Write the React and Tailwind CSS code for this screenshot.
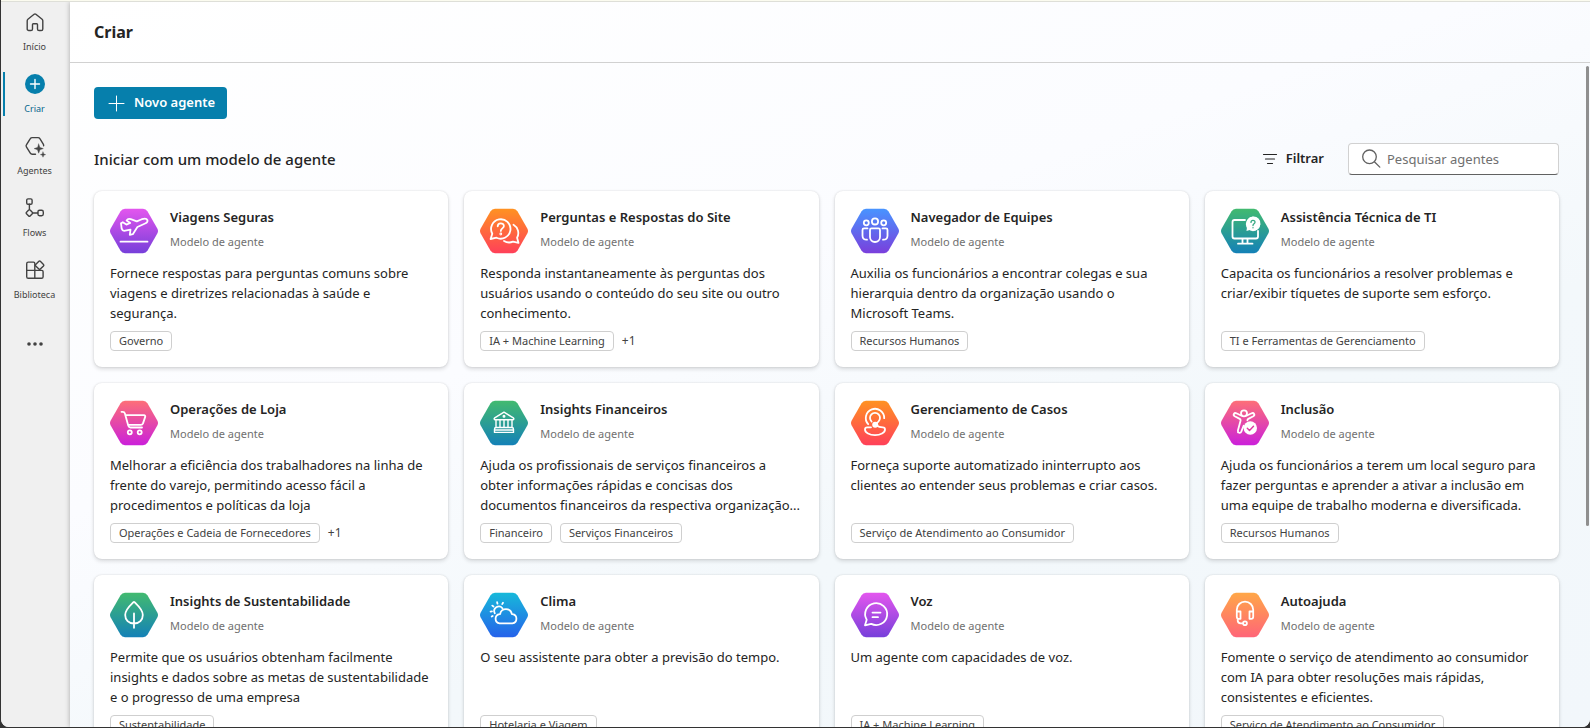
import React from "react";

const gradients = {
  purple: ["#e356ee", "#773fda"],
  orange: ["#ff9222", "#ff4059"],
  blue: ["#4894ff", "#7a3fdc"],
  green: ["#42ba70", "#1481b7"],
  pink: ["#fd6f78", "#cb20da"],
  sky: ["#17b9da", "#2562ea"],
  peach: ["#ffa748", "#ff6578"],
};

const glyphs = {
  plane: (
    <>
      <path d="M11 16.200l1.800-1 3.600 2.400 3.800-1.600-3.600-2.600c1-1.600 2.600-1.800 4.200-1.200l6 2.200 5-2.200c2.800-1 5-.6 5.600.9.600 1.600-.7 2.700-2.300 3.400L27.400 20l-4.600 7.200-3 .6.700-5.200-5.300 1.100c-1.800.4-3-.2-3.500-1.900z" />
      <path d="M10.500 34.700h27" />
    </>
  ),
  question: (
    <>
      <path d="M10.600 32l1.700-5.300a9.700 9.700 0 1 1 4.200 4z" />
      <path d="M17.700 19.300c0-4 6.200-3.800 6.200-.3 0 2.400-3.100 2.400-3.100 4.900" />
      <circle cx="20.800" cy="27" r=".5" />
      <path d="M33.500 17.700a9.700 9.700 0 0 1 3.600 13l1.400 5.200-5.500-1.300a9.500 9.500 0 0 1-9-.7" />
    </>
  ),
  team: (
    <>
      <circle cx="24" cy="14.400" r="3.100" />
      <circle cx="15.300" cy="15.800" r="2.500" />
      <circle cx="32.700" cy="15.800" r="2.500" />
      <path d="M20.500 21.400h7c.9 0 1.500.6 1.500 1.500V30a5 5 0 0 1-10 0v-7.100c0-.9.6-1.500 1.500-1.500z" />
      <path d="M16.500 21.400H13c-.9 0-1.500.6-1.500 1.500v5.800c0 2.800 1.700 4.200 4.500 4M31.500 21.400H35c.9 0 1.500.6 1.500 1.500v5.800c0 2.800-1.700 4.200-4.500 4" />
    </>
  ),
  monitor: (
    <>
      <path d="M24 13H13.500c-1.200 0-2 .8-2 2v14.500c0 1.200.8 2 2 2h21.500c1.200 0 2-.8 2-2V24M21.500 31.500v5M26.500 31.500v5M17 36.700h14.500" />
      <path d="M25.500 24l.6-4.700a7 7 0 1 1 3.400 3.500z" fill="white" stroke="none" />
      <circle cx="32" cy="17" r="7.200" fill="white" stroke="none" />
      <path d="M30 15.400c0-2.700 4-2.600 4-.2 0 1.700-2 1.500-2 3.300M32 20.600v.2" stroke="#36a882" strokeWidth="1.300" />
    </>
  ),
  cart: (
    <>
      <path d="M11.500 12.800h1.300c1.100 0 1.800.6 2.100 1.700l3.400 12.300c.4 1.200 1 1.700 2.200 1.700H32M15.500 16.200H34c1 0 1.500.7 1.200 1.700l-2.200 6.500c-.4 1-1 1.500-2.100 1.500H18.300" />
      <circle cx="19.800" cy="33.300" r="2" />
      <circle cx="29.700" cy="33.300" r="2" />
    </>
  ),
  bank: (
    <g strokeWidth="1.400">
      <path d="M24 13.200l9.300 5.600c.9.600.6 1.900-.5 1.900H15.200c-1.100 0-1.400-1.300-.5-1.900zM16 20.700v7.600M20 20.700v7.600M24 20.700v7.600M28 20.700v7.600M32 20.700v7.600M14.500 33.400v-3.200c0-1 .6-1.700 1.600-1.700h15.800c1 0 1.600.7 1.600 1.700v3.200zM14.500 31H33.500" />
      <circle cx="24" cy="17.300" r=".8" />
    </g>
  ),
  care: (
    <>
      <path d="M17.200 25.200a9.200 9.200 0 1 1 16-6" />
      <path d="M20.600 22.600a5 5 0 1 1 6.800 0L24 25.600" />
      <circle cx="24.200" cy="25.700" r="2.100" fill="white" />
      <path d="M20 28.300h-3.800c-1.400 0-2.200.8-2.200 2.100 0 3.300 4.600 5.700 10 5.700s10-2.400 10-5.700c0-1.300-.8-2.100-2.200-2.100-2.800 0-4.600-.6-6-1.800" />
    </>
  ),
  inclusion: (
    <>
      <circle cx="23" cy="14.300" r="3" />
      <path d="M20 16.500l-4.600-2.200c-2.300-1-3.800 1.800-1.700 3l5 2.600c.7.400 1 .9.900 1.700l-2.700 10c-.5 2.200 2.500 3.200 3.400 1.100l2.400-6M26 16.500l4.600-2.200c2.300-1 3.800 1.800 1.700 3l-5 2.600c-.7.400-.9.700-.9 1.400" />
      <circle cx="29.300" cy="29" r="6.700" fill="white" stroke="none" />
      <path d="M26.300 29.200l2.200 2.200 4-4.200" stroke="#df399f" strokeWidth="1.400" />
    </>
  ),
  leaf: (
    <path d="M24 36.800V22.500M24 32.500c-5.400 0-8.800-3.600-8.800-8.600 0-5.400 4.800-9.400 8-12.500.5-.5 1.100-.5 1.600 0 3.200 3.100 8 7.100 8 12.500 0 5-3.400 8.600-8.800 8.600z" />
  ),
  weather: (
    <>
      <path d="M26 18.200a6 6 0 0 1 5.900 4.900h.5a4.700 4.700 0 0 1 0 9.300H19.600a4.700 4.700 0 0 1 0-9.300h.5a6 6 0 0 1 5.900-4.900z" />
      <path d="M14.800 22.300a4.600 4.600 0 0 1 7.600-5.100M10.600 20.600l1.400-.3M12.300 14.600l1.200.9M17.100 11.200l.4 1.500M23 11.800l-.8 1.300M11.700 25.500l1-.6" />
    </>
  ),
  voice: (
    <>
      <path d="M14 34.300l1.700-5.600a11 11 0 1 1 4.500 4.200z" />
      <path d="M21.500 21.600h8M21.500 26.200h5.500" />
    </>
  ),
  headset: (
    <>
      <path d="M19.500 20.500h-3.700v-1.700a8.200 8.200 0 0 1 16.400 0v1.700h-3.700v7.300h1.600c1.300 0 2.100-.8 2.100-2.100v-5.200M15.800 20.500v5.200c0 1.300.8 2.100 2.100 2.100h1.600v-7.300M16.700 27.800v1.500c0 1.900 1.300 3 3 3h2.100" />
      <circle cx="24" cy="32.300" r="1.900" />
    </>
  ),
};

const agents = [
  { title: "Viagens Seguras", glyph: "plane", color: "purple", text: "Fornece respostas para perguntas comuns sobre viagens e diretrizes relacionadas à saúde e segurança.", tags: ["Governo"] },
  { title: "Perguntas e Respostas do Site", glyph: "question", color: "orange", text: "Responda instantaneamente às perguntas dos usuários usando o conteúdo do seu site ou outro conhecimento.", tags: ["IA + Machine Learning"], more: "+1" },
  { title: "Navegador de Equipes", glyph: "team", color: "blue", text: "Auxilia os funcionários a encontrar colegas e sua hierarquia dentro da organização usando o Microsoft Teams.", tags: ["Recursos Humanos"] },
  { title: "Assistência Técnica de TI", glyph: "monitor", color: "green", text: "Capacita os funcionários a resolver problemas e criar/exibir tíquetes de suporte sem esforço.", tags: ["TI e Ferramentas de Gerenciamento"] },
  { title: "Operações de Loja", glyph: "cart", color: "pink", text: "Melhorar a eficiência dos trabalhadores na linha de frente do varejo, permitindo acesso fácil a procedimentos e políticas da loja", tags: ["Operações e Cadeia de Fornecedores"], more: "+1" },
  { title: "Insights Financeiros", glyph: "bank", color: "green", text: "Ajuda os profissionais de serviços financeiros a obter informações rápidas e concisas dos documentos financeiros da respectiva organização...", tags: ["Financeiro", "Serviços Financeiros"] },
  { title: "Gerenciamento de Casos", glyph: "care", color: "orange", text: "Forneça suporte automatizado ininterrupto aos clientes ao entender seus problemas e criar casos.", tags: ["Serviço de Atendimento ao Consumidor"] },
  { title: "Inclusão", glyph: "inclusion", color: "pink", text: "Ajuda os funcionários a terem um local seguro para fazer perguntas e aprender a ativar a inclusão em uma equipe de trabalho moderna e diversificada.", tags: ["Recursos Humanos"] },
  { title: "Insights de Sustentabilidade", glyph: "leaf", color: "green", text: "Permite que os usuários obtenham facilmente insights e dados sobre as metas de sustentabilidade e o progresso de uma empresa", tags: ["Sustentabilidade"] },
  { title: "Clima", glyph: "weather", color: "sky", text: "O seu assistente para obter a previsão do tempo.", tags: ["Hotelaria e Viagem"] },
  { title: "Voz", glyph: "voice", color: "purple", text: "Um agente com capacidades de voz.", tags: ["IA + Machine Learning"] },
  { title: "Autoajuda", glyph: "headset", color: "peach", text: "Fomente o serviço de atendimento ao consumidor com IA para obter resoluções mais rápidas, consistentes e eficientes.", tags: ["Serviço de Atendimento ao Consumidor"] },
];

function HexIcon({ id, color, glyph }) {
  const [from, to] = gradients[color];
  return (
    <svg viewBox="0 0 48 48" className="size-12 shrink-0" aria-hidden="true">
      <defs>
        <linearGradient id={id} x1="0" y1="0" x2="0" y2="1">
          <stop offset="0" stopColor={from} />
          <stop offset="1" stopColor={to} />
        </linearGradient>
      </defs>
      <path
        d="M15 1.800h18q3 0 4.600 2.600L47.300 21.500q1.400 2.500 0 5L37.600 43.600Q36 46.200 33 46.200H15q-3 0-4.600-2.600L.7 26.500q-1.400-2.500 0-5L10.400 4.400Q12 1.800 15 1.800z"
        fill={`url(#${id})`}
      />
      <g fill="none" stroke="white" strokeWidth="1.800" strokeLinecap="round" strokeLinejoin="round">
        {glyphs[glyph]}
      </g>
    </svg>
  );
}

function AgentCard({ agent, index }) {
  return (
    <article className="flex min-h-44 min-w-0 flex-col gap-2 rounded-lg bg-white p-4 shadow-[0_0_2px_rgba(0,0,0,0.12),0_2px_4px_rgba(0,0,0,0.14)]">
      <div className="flex gap-3">
        <HexIcon id={`hex-${index}`} color={agent.color} glyph={agent.glyph} />
        <div className="flex min-w-0 flex-col gap-1">
          <h3 className="text-[13px] leading-5 font-semibold text-[#242424]">{agent.title}</h3>
          <p className="text-[11px] leading-[22px] text-[#707070]">Modelo de agente</p>
        </div>
      </div>
      <p className="min-h-15 text-[13px] leading-5 text-[#242424]">{agent.text}</p>
      <div className="flex items-center gap-2 text-[11px] leading-4 text-[#424242]">
        {agent.tags.map((tag) => (
          <span key={tag} className="flex h-5 items-center rounded-sm border border-[#cfcfcf] px-2 whitespace-nowrap">
            {tag}
          </span>
        ))}
        {agent.more && <span className="text-xs">{agent.more}</span>}
      </div>
    </article>
  );
}

const navIcons = {
  home: <path d="M9.100 2.300a1.400 1.400 0 0 1 1.800 0l6.200 5c.4.400.7.900.7 1.500v8.100c0 .9-.7 1.600-1.600 1.600h-2.100c-.9 0-1.600-.7-1.600-1.600v-4.300c0-.5-.4-.8-.8-.8H8.300c-.5 0-.8.3-.8.8v4.300c0 .9-.7 1.600-1.600 1.600H3.800c-.9 0-1.600-.7-1.600-1.600V8.800c0-.6.200-1.100.7-1.500z" />,
  create: (
    <>
      <circle cx="10" cy="10" r="10" fill="#067fac" stroke="none" />
      <path d="M10 5.500v9M5.500 10h9" stroke="white" />
    </>
  ),
  agents: (
    <>
      <path d="M10.500 18.200H7.200c-.8 0-1.500-.4-1.900-1.100L1.400 10.800c-.4-.6-.4-1.300 0-1.900l3.900-6.200c.4-.7 1.100-1.100 1.900-1.100h5.800c.8 0 1.500.4 1.900 1.100l3.500 5.700c.3.500.4.9.2 1.400" />
      <path d="M13.700 8l1.200 3.400 3.400 1.200-3.400 1.200-1.200 3.400-1.200-3.400-3.400-1.200 3.400-1.200zM18 16l.7 1.900 1.900.7-1.900.7-.7 1.900-.7-1.900-1.900-.7 1.900-.7z" fill="currentColor" stroke="currentColor" strokeWidth=".4" />
    </>
  ),
  flows: (
    <>
      <rect x="1.700" y=".9" width="5.400" height="5.400" rx="1.300" />
      <rect x="12.900" y="12.300" width="5.400" height="5.400" rx="1.700" />
      <path d="M4.400 6.300v5.300M7.700 15h5.200M3.700 12l-2.200 2.300c-.4.400-.4 1 0 1.400L3.700 18c.4.400 1 .4 1.400 0l2.200-2.300c.4-.4.4-1 0-1.400L5.100 12c-.4-.4-1-.4-1.400 0z" />
    </>
  ),
  library: (
    <>
      <path d="M9.800 18.300V3.400c0-.7-.6-1.300-1.300-1.300H3.300c-.9 0-1.600.7-1.600 1.600V16.700c0 .9.700 1.600 1.600 1.600h13.200c.9 0 1.600-.7 1.600-1.600v-5c0-.7-.6-1.300-1.300-1.300H1.700" />
      <path d="M13.900 1.300l-3.200 3.200c-.4.400-.4 1 0 1.400l3.200 3.200c.4.400 1 .4 1.400 0l3.200-3.200c.4-.4.400-1 0-1.400l-3.200-3.200c-.4-.4-1-.4-1.400 0z" />
    </>
  ),
};

const navItems = [
  { label: "Início", icon: "home" },
  { label: "Criar", icon: "create", active: true },
  { label: "Agentes", icon: "agents" },
  { label: "Flows", icon: "flows" },
  { label: "Biblioteca", icon: "library" },
];

function Sidebar() {
  return (
    <nav className="flex w-[69px] shrink-0 flex-col items-center gap-[18px] bg-[#f0f0f0] pt-2">
      {navItems.map(({ label, icon, active }) => (
        <a
          key={label}
          href="#"
          className={
            active
              ? "relative flex h-11 w-full flex-col items-center gap-2 pt-0.5 pr-0.5 text-[#03658c]"
              : "relative flex h-11 w-full flex-col items-center gap-2 pt-0.5 pr-0.5 text-[#424242]"
          }
        >
          {active && <span className="absolute top-0 left-0.5 h-11 w-0.5 bg-[#067fac]" />}
          <svg viewBox="0 0 20 20" className="size-5 shrink-0 overflow-visible" fill="none" stroke="currentColor" strokeWidth="1.400" strokeLinecap="round" strokeLinejoin="round" aria-hidden="true">
            {navIcons[icon]}
          </svg>
          <span className="text-[9px] leading-[14px]">{label}</span>
        </a>
      ))}
      <button type="button" aria-label="Mais" className="flex h-12 w-full items-center justify-center pr-0.5 text-[#424242]">
        <svg viewBox="0 0 20 20" className="size-5" fill="currentColor" aria-hidden="true">
          <circle cx="4" cy="10" r="1.800" />
          <circle cx="10" cy="10" r="1.800" />
          <circle cx="16" cy="10" r="1.800" />
        </svg>
      </button>
    </nav>
  );
}

export default function App() {
  return (
    <div className="flex h-screen bg-[#333333] pb-px pl-px font-['Noto_Sans','Open_Sans',sans-serif]">
      <div className="flex min-w-0 flex-1 flex-col overflow-hidden rounded-b-lg bg-white">
        <div className="h-0.5 shrink-0 border-b border-[#dedfd8] bg-[#fbfbef]" />
        <div className="flex min-h-0 flex-1 overflow-hidden">
          <Sidebar />
          <main className="relative flex min-w-0 flex-1 flex-col bg-linear-[160deg,#ffffff_0%,#fbfcff_40%,#f3f8fb_65%,#f2f7fb_100%] shadow-[0_0_5px_rgba(0,0,0,0.3)]">
            <header className="flex h-[61px] shrink-0 items-center border-b border-[#d1d1d1] px-6">
              <h1 className="text-base font-bold text-[#242424]">Criar</h1>
            </header>
            <div className="min-h-0 flex-1 overflow-hidden pt-6 pr-[31px] pl-6">
              <button type="button" className="flex h-8 items-center gap-2 rounded bg-[#067fac] px-3 text-[13px] font-semibold text-white">
                <svg viewBox="0 0 20 20" className="size-5" fill="none" stroke="currentColor" strokeLinecap="round" aria-hidden="true">
                  <path d="M10.500 3v15M3 10.500h15" />
                </svg>
                Novo agente
              </button>
              <div className="mt-6 mb-4 flex items-center gap-3">
                <h2 className="flex-1 text-[15px] leading-6 font-medium text-[#242424]">Iniciar com um modelo de agente</h2>
                <button type="button" className="flex h-8 items-center gap-1.5 px-3 text-[13px] font-semibold text-[#242424]">
                  <svg viewBox="0 0 20 20" className="size-5" fill="none" stroke="currentColor" strokeWidth="1.200" strokeLinecap="round" aria-hidden="true">
                    <path d="M3.500 5.500h13M5.500 10h9M7.500 14.500h5" />
                  </svg>
                  Filtrar
                </button>
                <label className="flex h-8 w-[211px] items-center gap-1.5 rounded border border-[#d1d1d1] border-b-[#616161] bg-white px-3">
                  <svg viewBox="0 0 20 20" className="size-5 shrink-0" fill="none" stroke="#616161" strokeWidth="1.300" strokeLinecap="round" aria-hidden="true">
                    <circle cx="8.500" cy="7.800" r="6.800" />
                    <path d="M13.400 12.700l5.400 5.400" />
                  </svg>
                  <input type="search" aria-label="Pesquisar agentes" placeholder="Pesquisar agentes" className="min-w-0 flex-1 bg-transparent text-[13px] leading-5 outline-none placeholder:text-[#707070]" />
                </label>
              </div>
              <div className="grid grid-cols-4 gap-4 pb-6">
                {agents.map((agent, index) => (
                  <AgentCard key={agent.title} agent={agent} index={index} />
                ))}
              </div>
            </div>
            <div className="absolute top-16 right-px h-[460px] w-[3px] rounded-full bg-[#8f8f8f]" />
          </main>
        </div>
      </div>
    </div>
  );
}
